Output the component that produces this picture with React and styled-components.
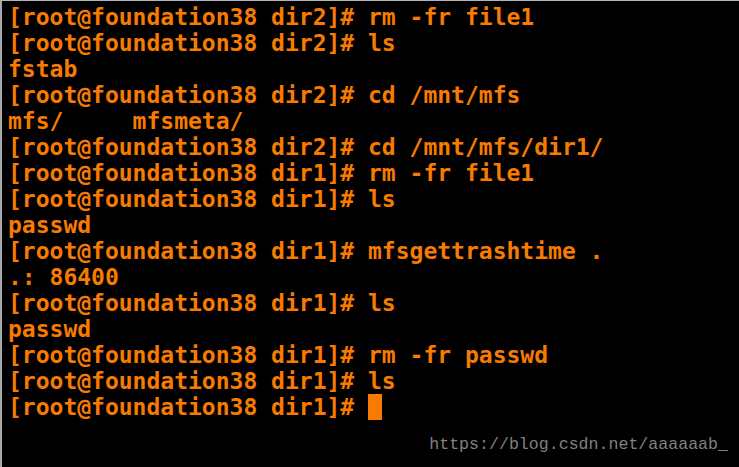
import styled, { createGlobalStyle } from 'styled-components'

const lines = [
	'[root@foundation38 dir2]# rm -fr file1',
	'[root@foundation38 dir2]# ls',
	'fstab',
	'[root@foundation38 dir2]# cd /mnt/mfs',
	'mfs/     mfsmeta/',
	'[root@foundation38 dir2]# cd /mnt/mfs/dir1/',
	'[root@foundation38 dir1]# rm -fr file1',
	'[root@foundation38 dir1]# ls',
	'passwd',
	'[root@foundation38 dir1]# mfsgettrashtime .',
	'.: 86400',
	'[root@foundation38 dir1]# ls',
	'passwd',
	'[root@foundation38 dir1]# rm -fr passwd',
	'[root@foundation38 dir1]# ls',
]

export default function App() {
	return (
		<>
			<GlobalStyle />
			<Terminal>
				<Output>
					{lines.map((line, i) => (
						<Line key={i}>{line}</Line>
					))}
					<Line>
						[root@foundation38 dir1]# <Cursor />
					</Line>
				</Output>
				<Watermark>https://blog.csdn.net/aaaaaab_</Watermark>
			</Terminal>
		</>
	)
}

const GlobalStyle = createGlobalStyle`
	html, body {
		margin: 0;
		padding: 0;
		background: #000;
	}
`

const Terminal = styled.main`
	position: relative;
	width: 739px;
	height: 467px;
	box-sizing: border-box;
	background: #000;
	border-top: 1px solid #b4b4b4;
	border-left: 2px solid #a8a8a8;
	overflow: hidden;
`

const Output = styled.pre`
	margin: 0;
	padding: 3px 0 0 6px;
	font-family: 'DejaVu Sans Mono', monospace;
	font-weight: bold;
	font-size: 23px;
	line-height: 26px;
	color: #f67b00;
`

const Line = styled.div`
	height: 26px;
	white-space: pre;
`

const Cursor = styled.span`
	display: inline-block;
	width: 14px;
	height: 26px;
	vertical-align: top;
	background: #f67b00;
`

const Watermark = styled.div`
	position: absolute;
	right: 11px;
	bottom: 13px;
	font-family: 'Liberation Mono', monospace;
	font-size: 16.6px;
	color: #808080;
`
